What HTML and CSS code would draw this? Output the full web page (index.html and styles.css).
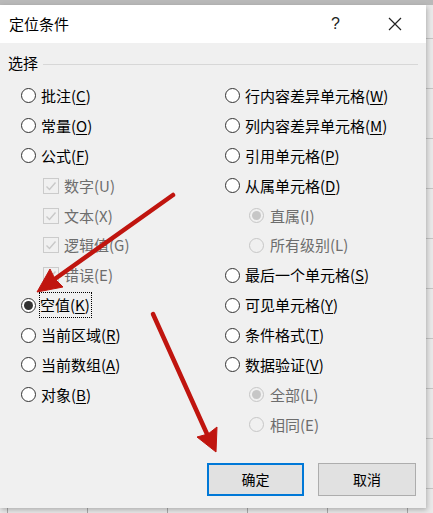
FILE: index.html
```html
<!DOCTYPE html>
<html lang="zh">
<head>
<meta charset="utf-8">
<title>定位条件</title>
<link rel="stylesheet" href="styles.css">
</head>
<body>
<div class="dialog">
  <div class="titlebar">
    <span class="title">定位条件</span>
    <span class="help">?</span>
    <svg class="close" width="14" height="14" viewBox="0 0 14 14"><path d="M1 1L13 13M13 1L1 13" stroke="#222" stroke-width="1.2" fill="none"/></svg>
  </div>
  <div class="content">
    <div class="group-head"><span>选择</span><span class="rule"></span></div>
    <div class="options">
      <div class="col">
        <div class="opt"><span class="radio"></span><span>批注(<u>C</u>)</span></div>
        <div class="opt"><span class="radio"></span><span>常量(<u>O</u>)</span></div>
        <div class="opt"><span class="radio"></span><span>公式(<u>F</u>)</span></div>
        <div class="opt sub dis"><span class="check"><svg width="14" height="14" viewBox="0 0 14 14"><path d="M2.5 7.5L5.5 10.5L11.5 3.5" stroke="#c8c8c8" stroke-width="1.4" fill="none"/></svg></span><span>数字(U)</span></div>
        <div class="opt sub dis"><span class="check"><svg width="14" height="14" viewBox="0 0 14 14"><path d="M2.5 7.5L5.5 10.5L11.5 3.5" stroke="#c8c8c8" stroke-width="1.4" fill="none"/></svg></span><span>文本(X)</span></div>
        <div class="opt sub dis"><span class="check"><svg width="14" height="14" viewBox="0 0 14 14"><path d="M2.5 7.5L5.5 10.5L11.5 3.5" stroke="#c8c8c8" stroke-width="1.4" fill="none"/></svg></span><span>逻辑值(G)</span></div>
        <div class="opt sub dis"><span class="check"><svg width="14" height="14" viewBox="0 0 14 14"><path d="M2.5 7.5L5.5 10.5L11.5 3.5" stroke="#c8c8c8" stroke-width="1.4" fill="none"/></svg></span><span>错误(E)</span></div>
        <div class="opt"><span class="radio on"></span><span class="focus">空值(<u>K</u>)</span></div>
        <div class="opt"><span class="radio"></span><span>当前区域(<u>R</u>)</span></div>
        <div class="opt"><span class="radio"></span><span>当前数组(<u>A</u>)</span></div>
        <div class="opt"><span class="radio"></span><span>对象(<u>B</u>)</span></div>
      </div>
      <div class="col">
        <div class="opt"><span class="radio"></span><span>行内容差异单元格(<u>W</u>)</span></div>
        <div class="opt"><span class="radio"></span><span>列内容差异单元格(<u>M</u>)</span></div>
        <div class="opt"><span class="radio"></span><span>引用单元格(<u>P</u>)</span></div>
        <div class="opt"><span class="radio"></span><span>从属单元格(<u>D</u>)</span></div>
        <div class="opt sub2 dis"><span class="radio on"></span><span>直属(I)</span></div>
        <div class="opt sub2 dis"><span class="radio"></span><span>所有级别(L)</span></div>
        <div class="opt"><span class="radio"></span><span>最后一个单元格(<u>S</u>)</span></div>
        <div class="opt"><span class="radio"></span><span>可见单元格(<u>Y</u>)</span></div>
        <div class="opt"><span class="radio"></span><span>条件格式(<u>T</u>)</span></div>
        <div class="opt"><span class="radio"></span><span>数据验证(<u>V</u>)</span></div>
        <div class="opt sub2 dis"><span class="radio on"></span><span>全部(L)</span></div>
        <div class="opt sub2 dis"><span class="radio"></span><span>相同(E)</span></div>
      </div>
    </div>
    <div class="buttons">
      <button class="btn primary">确定</button>
      <button class="btn">取消</button>
    </div>
  </div>
</div>
<svg class="arrows" width="433" height="513" viewBox="0 0 433 513">
  <g fill="#c0150f" stroke="#c0150f">
    <line x1="173" y1="195" x2="52" y2="281" stroke-width="4.5" stroke-linecap="round"/>
    <polygon points="37,292 50,269 55,279 63,287" stroke-width="1"/>
    <line x1="153" y1="314" x2="207" y2="434" stroke-width="4.5" stroke-linecap="round"/>
    <polygon points="216,452 197,437 208,434 217,427" stroke-width="1"/>
  </g>
</svg>
</body>
</html>
```
FILE: styles.css
```css
html, body {
  margin: 0;
  padding: 0;
}
body {
  width: 433px;
  height: 513px;
  overflow: hidden;
  position: relative;
  background-color: #e9e9e9;
  background-image:
    linear-gradient(#b9b9b9, #b9b9b9),
    repeating-linear-gradient(to bottom, transparent 0, transparent 38px, #c4c4c4 38px, #c4c4c4 39px, transparent 39px, transparent 50px),
    repeating-linear-gradient(to right, transparent 0, transparent 7px, #a8a8a8 7px, #a8a8a8 8px, transparent 8px, transparent 80px);
  background-size: 433px 5px, 433px 513px, 433px 513px;
  background-repeat: no-repeat;
  font-family: "Noto Sans CJK SC", "Noto Sans", sans-serif;
  color: #000;
}
.dialog {
  margin-top: 5px;
  width: 426px;
  height: 503px;
  background: #f0f0f0;
  box-shadow: 1px 2px 5px rgba(0,0,0,0.25);
  display: flex;
  flex-direction: column;
}
.titlebar {
  height: 38px;
  background: #fff;
  display: flex;
  align-items: center;
  padding-left: 9px;
  font-size: 15px;
}
.title {
  flex: 1;
  line-height: 20px;
}
.help {
  font-family: "Liberation Sans", sans-serif;
  font-size: 16px;
  width: 12px;
  margin-right: 45px;
  color: #222;
}
.close {
  margin-right: 24px;
}
.content {
  font-size: 15px;
}
.group-head {
  height: 38px;
  display: flex;
  align-items: center;
  padding: 0 8px;
  box-sizing: border-box;
}
.group-head span:first-child {
  line-height: 20px;
  margin-top: 2px;
}
.rule {
  flex: 1;
  height: 1px;
  background: #d7d7d7;
  margin-left: 5px;
  margin-top: 4px;
}
.options {
  display: flex;
  padding-left: 21px;
}
.col {
  display: flex;
  flex-direction: column;
}
.col:first-child {
  width: 204px;
}
.opt {
  height: 29.9px;
  display: flex;
  align-items: center;
  gap: 5px;
  line-height: 20px;
  white-space: nowrap;
}
.opt u {
  text-decoration-thickness: 1px;
  text-underline-offset: 2px;
}
.radio {
  width: 13px;
  height: 13px;
  border: 1px solid #333;
  border-radius: 50%;
  background: #fff;
  display: flex;
  align-items: center;
  justify-content: center;
  flex: none;
}
.radio.on::after {
  content: "";
  width: 9px;
  height: 9px;
  border-radius: 50%;
  background: #333;
}
.sub {
  padding-left: 22px;
  gap: 5px;
}
.sub2 {
  padding-left: 24px;
  gap: 6px;
}
.dis {
  color: #6d6d6d;
}
.dis .radio {
  border-color: #c6c6c6;
  background: #f0f0f0;
}
.dis .radio.on::after {
  background: #c6c6c6;
}
.check {
  width: 14px;
  height: 14px;
  border: 1px solid #cbcbcb;
  background: #f0f0f0;
  display: flex;
  flex: none;
}
.focus {
  outline: 1px dotted #000;
  outline-offset: 0;
  padding: 2px 1px 2px 0;
  margin-left: -1px;
}
.buttons {
  display: flex;
  justify-content: flex-end;
  gap: 14px;
  padding-right: 10px;
  margin-top: 23px;
}
.btn {
  width: 98px;
  height: 33px;
  background: #e1e1e1;
  border: 1px solid #adadad;
  font-family: "Noto Sans CJK SC", sans-serif;
  font-size: 14px;
  color: #000;
  padding: 0;
}
.btn.primary {
  width: 97px;
  border: 2px solid #0078d7;
}
.arrows {
  position: absolute;
  left: 0;
  top: 0;
  pointer-events: none;
}
```
